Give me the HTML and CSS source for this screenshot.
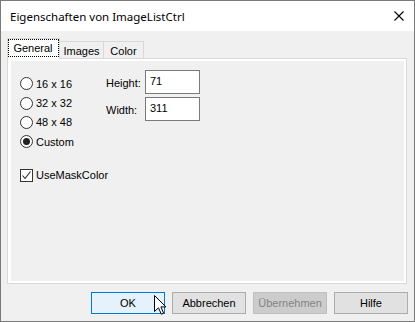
FILE: index.html
```html
<!DOCTYPE html>
<html>
  <head>
    <meta charset="UTF-8">
    <title>Eigenschaften von ImageListCtrl</title>
    <link rel="stylesheet" href="styles.css">
  </head>
  <body>
    <div class="window">
      <div class="titlebar">
        <span class="title">Eigenschaften von ImageListCtrl</span>
        <svg class="close" width="10" height="10" viewBox="0 0 10 10">
          <path d="M0.5 0.5L9.5 9.5M9.5 0.5L0.5 9.5" stroke="#000" stroke-width="1.1" fill="none"/>
        </svg>
      </div>
      <div class="client">
        <div class="tabs">
          <div class="tab active"><span class="focus">General</span></div>
          <div class="tab tab-images">Images</div>
          <div class="tab tab-color">Color</div>
        </div>
        <div class="panel">
          <div class="page">
            <div class="sizes">
              <div class="opt"><span class="radio"></span>16 x 16</div>
              <div class="opt"><span class="radio"></span>32 x 32</div>
              <div class="opt"><span class="radio"></span>48 x 48</div>
              <div class="opt"><span class="radio on"></span>Custom</div>
              <div class="opt mask">
                <span class="check">
                  <svg width="11" height="11" viewBox="0 0 11 11"><path d="M1.5 5.5L4 8.5L9.5 1.5" stroke="#222" stroke-width="1.1" fill="none"/></svg>
                </span>UseMaskColor
              </div>
            </div>
            <div class="dims">
              <span class="lbl">Height:</span>
              <div class="field">71</div>
              <span class="lbl">Width:</span>
              <div class="field">311</div>
            </div>
          </div>
        </div>
        <div class="buttons">
          <div class="btn default">OK</div>
          <div class="btn">Abbrechen</div>
          <div class="btn disabled">Übernehmen</div>
          <div class="btn">Hilfe</div>
        </div>
      </div>
      <svg class="cursor" width="13" height="20" viewBox="0 0 13 20">
        <path d="M0.5 0.5L0.5 16.5L4.5 12.8L7.3 19.2L9.6 18.2L6.9 11.9L11.9 11.9Z" fill="#fff" stroke="#000" stroke-width="1" stroke-linejoin="miter"/>
      </svg>
    </div>
  </body>
</html>
```

FILE: styles.css
```css
html, body {
  margin: 0;
  padding: 0;
}
body {
  width: 415px;
  height: 322px;
  overflow: hidden;
  font-family: 'Liberation Sans', Arial, sans-serif;
  font-size: 11px;
  color: #000;
}
.window {
  position: relative;
  box-sizing: border-box;
  width: 415px;
  height: 322px;
  border: 1px solid #7a7a7a;
  display: flex;
  flex-direction: column;
  background-color: #f0f0f0;
}
.titlebar {
  height: 30px;
  background-color: #fff;
  display: flex;
  align-items: center;
  justify-content: space-between;
  padding-left: 9px;
  padding-right: 10px;
}
.title {
  font-family: 'Noto Sans', 'Open Sans', sans-serif;
  font-size: 11.5px;
  margin-top: 1px;
}
.client {
  flex: 1;
  display: flex;
  flex-direction: column;
  padding: 7px 7px 7px 6px;
}
.tabs {
  position: relative;
  z-index: 1;
  height: 21px;
  margin-bottom: -1px;
  display: flex;
  align-items: flex-end;
}
.tab {
  box-sizing: border-box;
  height: 17px;
  margin-bottom: 1px;
  border: 1px solid #d9d9d9;
  border-bottom: none;
  border-left: none;
  display: flex;
  align-items: center;
  justify-content: center;
  padding-top: 1px;
}
.tab.active {
  width: 53px;
  height: 21px;
  margin-bottom: 0;
  border-left: 1px solid #d9d9d9;
  background-color: #fff;
  padding-top: 0;
  padding-bottom: 2px;
}
.focus {
  outline: 1px dotted #000;
  outline-offset: 0;
  padding: 1px 5px 1px 4px;
  line-height: 14px;
}
.tab-images {
  width: 44px;
}
.tab-color {
  width: 40px;
}
.panel {
  box-sizing: border-box;
  height: 226px;
  border: 1px solid #d9d9d9;
  background-color: #fff;
  padding: 2px 2px 2px 3px;
}
.page {
  height: 100%;
  background-color: #f0f0f0;
  display: flex;
  padding: 9px 0 0 9px;
  box-sizing: border-box;
}
.sizes {
  width: 86px;
  margin-top: 4px;
}
.opt {
  height: 19.4px;
  display: flex;
  align-items: center;
  white-space: nowrap;
}
.opt.mask {
  margin-top: 14px;
}
.radio {
  box-sizing: border-box;
  width: 13px;
  height: 13px;
  border: 1px solid #333;
  border-radius: 50%;
  background-color: #fff;
  margin-right: 3px;
  display: flex;
  align-items: center;
  justify-content: center;
}
.radio.on::after {
  content: "";
  width: 7px;
  height: 7px;
  border-radius: 50%;
  background-color: #222;
}
.check {
  box-sizing: border-box;
  width: 13px;
  height: 13px;
  border: 1px solid #333;
  background-color: #fff;
  margin-right: 3px;
  display: flex;
  align-items: center;
  justify-content: center;
}
.check svg {
  display: block;
}
.dims {
  display: grid;
  grid-template-columns: 39px 55px;
  grid-auto-rows: 24px;
  row-gap: 3px;
  align-content: start;
  align-items: center;
}
.lbl {
  margin-top: 2px;
}
.field {
  box-sizing: border-box;
  height: 24px;
  border: 1px solid #7a7a7a;
  background-color: #fff;
  padding: 3px 0 0 4px;
  line-height: 14px;
}
.buttons {
  display: flex;
  justify-content: flex-end;
  gap: 7px;
  margin-top: 8px;
  margin-right: -1px;
}
.btn {
  box-sizing: border-box;
  width: 74px;
  height: 22px;
  border: 1px solid #adadad;
  background-color: #e1e1e1;
  display: flex;
  align-items: center;
  justify-content: center;
}
.btn.default {
  border-color: #0078d7;
  background-color: #e5f1fb;
}
.btn.disabled {
  border-color: #bfbfbf;
  background-color: #cccccc;
  color: #838383;
}
.cursor {
  position: absolute;
  left: 153px;
  top: 294px;
}
```
